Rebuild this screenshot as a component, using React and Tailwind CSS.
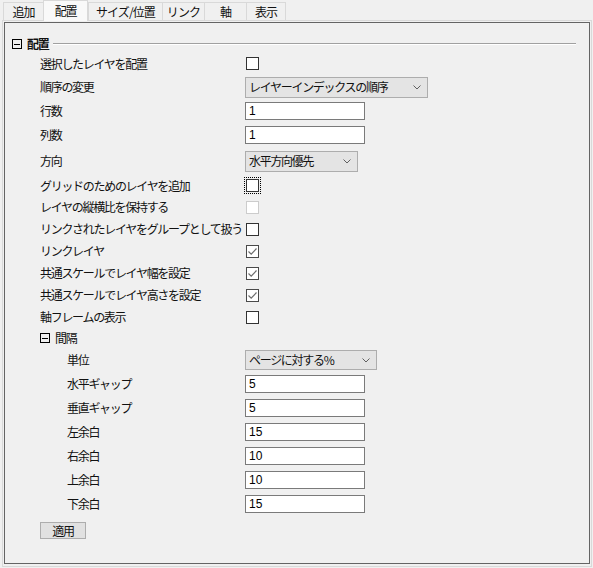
import React from "react";

const tabs = [
  { label: "追加", w: "w-[40px]" },
  { label: "配置", w: "w-[45px]", active: true },
  { label: "サイズ/位置", w: "w-[74px]" },
  { label: "リンク", w: "w-[42px]" },
  { label: "軸", w: "w-[42px]" },
  { label: "表示", w: "w-[40px]" },
];

const MinusBox = () => (
  <svg width="10" height="10" viewBox="0 0 10 10" className="shrink-0">
    <rect x="0.5" y="0.5" width="9" height="9" fill="none" stroke="#000" />
    <path d="M2 5.5 H8" stroke="#000" />
  </svg>
);

const Chevron = () => (
  <svg width="8" height="5" viewBox="0 0 8 5" className="shrink-0">
    <path d="M0.5 0.5 L4 4 L7.5 0.5" fill="none" stroke="#606060" />
  </svg>
);

const Check = ({ checked, disabled, focused }) => {
  const border = disabled ? "border-[#cccccc]" : checked ? "border-[#4a4a4a]" : "border-[#333333]";
  return (
    <span className="relative ml-[1px] inline-block">
      <span className={`flex h-[13px] w-[13px] items-center justify-center border bg-white ${border}`}>
        {checked && (
          <svg width="11" height="11" viewBox="0 0 11 11">
            <path d="M1.5 5.5 L4.2 8.2 L9.5 2.5" fill="none" stroke="#6d6d6d" strokeWidth="1.2" />
          </svg>
        )}
      </span>
      {focused && (
        <span className="absolute -left-[2px] -top-[2px] h-[17px] w-[17px] border border-dotted border-black" />
      )}
    </span>
  );
};

const Field = ({ value }) => (
  <input
    readOnly
    defaultValue={value}
    className="h-[18px] w-[120px] border border-[#7a7a7a] bg-white pl-[3px] font-['Liberation_Sans',sans-serif] text-[12px] tracking-normal text-black outline-none"
  />
);

const Select = ({ value, w, h = "h-[21px]" }) => (
  <div className={`flex items-center justify-between border border-[#adadad] bg-[#e4e4e4] pl-[3px] pr-[6px] ${w} ${h}`}>
    <span>{value}</span>
    <Chevron />
  </div>
);

const Row = ({ label, h = "h-[22px]", sub, children }) => (
  <div className={`flex items-center ${h}`}>
    <div className={sub ? "w-[178px] shrink-0 pl-[27px] box-content" : "w-[205px] shrink-0"}>{label}</div>
    {children}
  </div>
);

export default function App() {
  return (
    <div className="h-[568px] w-[593px] overflow-hidden whitespace-nowrap bg-[#f0f0f0] font-['Noto_Sans_CJK_JP',sans-serif] text-[12px] leading-[14px] tracking-[-1.3px] text-[#111]">
      <div className="flex h-[21px] items-end pl-[3px]">
        {tabs.map((t) =>
          t.active ? (
            <div
              key={t.label}
              className={`relative z-10 flex h-[21px] items-center justify-center border-x border-t border-[#d9d9d9] bg-[#f9f9f9] pb-[1px] ${t.w}`}
            >
              {t.label}
            </div>
          ) : (
            <div
              key={t.label}
              className={`flex h-[19px] items-center justify-center border-l border-t border-[#d9d9d9] tracking-[-0.9px] last:border-r ${t.w}`}
            >
              {t.label}
            </div>
          )
        )}
      </div>

      <div className="-mt-[1px] ml-[2px] h-[547px] w-[590px] border border-[#d9d9d9] p-[1px] pb-[2px]">
        <div className="h-full w-full border border-[#646464] pt-[13px]">
          <div className="flex h-[16px] items-center pl-[7px] pr-[13px]">
            <MinusBox />
            <span className="ml-[5px] font-bold">配置</span>
            <div className="ml-[5px] h-[2px] flex-1 border-t border-b border-t-[#a0a0a0] border-b-white" />
          </div>

          <div className="pl-[35px]">
            <Row label="選択したレイヤを配置" h="h-[23px]">
              <Check />
            </Row>
            <Row label="順序の変更" h="h-[24px]">
              <Select value="レイヤーインデックスの順序" w="w-[183px]" />
            </Row>
            <Row label="行数" h="h-[24px]">
              <Field value="1" />
            </Row>
            <Row label="列数" h="h-[24px]">
              <Field value="1" />
            </Row>
            <Row label="方向" h="h-[28px]">
              <Select value="水平方向優先" w="w-[113px]" />
            </Row>
            <Row label="グリッドのためのレイヤを追加" h="h-[21px]">
              <Check focused />
            </Row>
            <Row label="レイヤの縦横比を保持する">
              <Check disabled />
            </Row>
            <Row label="リンクされたレイヤをグループとして扱う">
              <Check />
            </Row>
            <Row label="リンクレイヤ">
              <Check checked />
            </Row>
            <Row label="共通スケールでレイヤ幅を設定">
              <Check checked />
            </Row>
            <Row label="共通スケールでレイヤ高さを設定">
              <Check checked />
            </Row>
            <Row label="軸フレームの表示">
              <Check />
            </Row>

            <div className="flex h-[20px] items-center">
              <MinusBox />
              <span className="ml-[5px]">間隔</span>
            </div>

            <Row sub label="単位" h="h-[24px]">
              <Select value="ページに対する%" w="w-[132px]" h="h-[20px]" />
            </Row>
            <Row sub label="水平ギャップ" h="h-[24px]">
              <Field value="5" />
            </Row>
            <Row sub label="垂直ギャップ" h="h-[24px]">
              <Field value="5" />
            </Row>
            <Row sub label="左余白" h="h-[24px]">
              <Field value="15" />
            </Row>
            <Row sub label="右余白" h="h-[24px]">
              <Field value="10" />
            </Row>
            <Row sub label="上余白" h="h-[24px]">
              <Field value="10" />
            </Row>
            <Row sub label="下余白" h="h-[24px]">
              <Field value="15" />
            </Row>

            <button className="mt-[6px] flex h-[17px] w-[46px] items-center justify-center border border-[#adadad] bg-[#e1e1e1] leading-none">
              適用
            </button>
          </div>
        </div>
      </div>
    </div>
  );
}
